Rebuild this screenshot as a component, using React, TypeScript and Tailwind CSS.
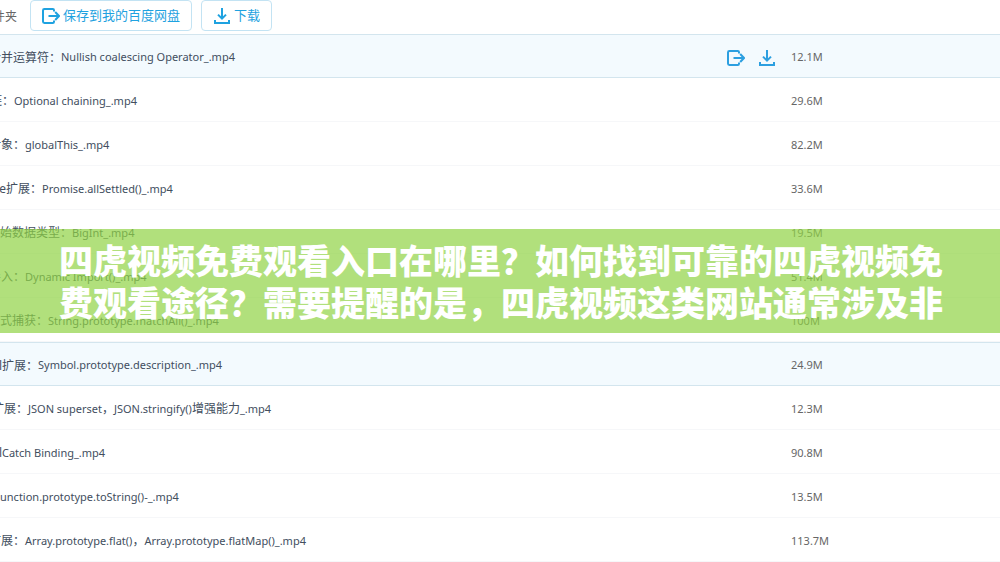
import clsx from 'clsx';

type FileRow = {
  lead: string;
  leadWidth: number;
  name: string;
  size: string;
  active?: boolean;
  actions?: boolean;
};

// leadWidth: visible part of the clipped start of each file name
const FILES: FileRow[] = [
  { lead: '合并运算符：', leadWidth: 61, name: 'Nullish coalescing Operator_.mp4', size: '12.1M', active: true, actions: true },
  { lead: '链：', leadWidth: 14, name: 'Optional chaining_.mp4', size: '29.6M' },
  { lead: '对象：', leadWidth: 25, name: 'globalThis_.mp4', size: '82.2M' },
  { lead: 'se扩展：', leadWidth: 42, name: 'Promise.allSettled()_.mp4', size: '33.6M' },
  { lead: '原始数据类型：', leadWidth: 72, name: 'BigInt_.mp4', size: '19.5M' },
  { lead: '导入：', leadWidth: 25, name: 'Dynamic Import()_.mp4', size: '51.4M' },
  { lead: '模式捕获：', leadWidth: 48, name: 'String.prototype.matchAll()_.mp4', size: '100M' },
  { lead: 'ol扩展：', leadWidth: 38, name: 'Symbol.prototype.description_.mp4', size: '24.9M', active: true },
  { lead: '扩展：', leadWidth: 28, name: 'JSON superset，JSON.stringify()增强能力_.mp4', size: '12.3M' },
  { lead: 'l', leadWidth: 2, name: 'Catch Binding_.mp4', size: '90.8M' },
  { lead: 'F', leadWidth: 0, name: 'unction.prototype.toString()-_.mp4', size: '13.5M' },
  { lead: '扩展：', leadWidth: 25, name: 'Array.prototype.flat()，Array.prototype.flatMap()_.mp4', size: '113.7M' },
];

function SaveIcon() {
  return (
    <svg width="18" height="18" viewBox="0 0 18 18" fill="none" stroke="currentColor" strokeWidth="2" aria-hidden="true">
      <path d="M12 4.5V3.2Q12 2 10.8 2H2.4Q1 2 1 3.4v11.2Q1 16 2.4 16h8.4q1.2 0 1.2-1.2v-1.3" />
      <path d="M6.5 9H17M13.2 5 17 9l-3.8 4" />
    </svg>
  );
}

function DownloadIcon() {
  return (
    <svg width="18" height="18" viewBox="0 0 18 18" fill="none" stroke="currentColor" strokeWidth="2" aria-hidden="true">
      <path d="M9 1v10.5M5 7.6l4 4 4-4" />
      <path d="M2 13v3h14v-3" />
    </svg>
  );
}

// Chinese runs are set one step larger than the Latin ones
function FileName({ name }: { name: string }) {
  return (
    <span>
      {name.split(/([，\u4e00-\u9fff]+)/).map((part, i) => (
        <span key={i} className={i % 2 ? 'text-xs' : 'text-[11px]'}>{part}</span>
      ))}
    </span>
  );
}

export default function App() {
  return (
    <div className="relative overflow-hidden bg-white font-['Noto_Sans','Noto_Sans_CJK_SC',sans-serif] text-[#424e5e]">
      {/* Toolbar */}
      <header className="flex h-[34px] items-start text-[13px]">
        <div className="flex h-[34px] w-[30px] shrink-0 items-center">
          <span className="flex w-[17px] justify-end overflow-hidden whitespace-nowrap text-xs text-[#666]">件夹</span>
        </div>
        <div className="flex gap-[9px] text-[#1fa2e0]">
          <button className="flex h-[31px] items-center gap-[3px] rounded border border-[#c3e3f3] px-[11px]">
            <SaveIcon />
            保存到我的百度网盘
          </button>
          <button className="flex h-[31px] items-center gap-[3px] rounded border border-[#c3e3f3] px-[11px]">
            <DownloadIcon />
            下载
          </button>
        </div>
      </header>

      {/* File list */}
      <table className="w-full table-fixed border-separate border-spacing-0 text-[11px]">
        <colgroup>
          <col />
          <col className="w-[209px]" />
        </colgroup>
        <tbody>
          {FILES.map(file => (
            <tr key={file.name} className={clsx(file.active && 'bg-[#f3fafe]')}>
              <td className={clsx('h-11 border-b p-0 pt-[3px]', file.active ? 'border-t border-[#d3e5ee]' : 'border-[#f6f7f9]')}>
                <div className="flex items-center justify-between pr-[15px]">
                  <div className="flex items-center whitespace-nowrap">
                    <span className="flex justify-end overflow-hidden text-xs" style={{ width: file.leadWidth }}>{file.lead}</span>
                    <FileName name={file.name} />
                  </div>
                  {file.actions && (
                    <div className="flex gap-[13px] text-[#2c9fe0]">
                      <button aria-label="保存"><SaveIcon /></button>
                      <button aria-label="下载"><DownloadIcon /></button>
                    </div>
                  )}
                </div>
              </td>
              <td className={clsx('h-11 border-b p-0 pt-[3px] text-[#666]', file.active ? 'border-t border-[#d3e5ee]' : 'border-[#f6f7f9]')}>
                {file.size}
              </td>
            </tr>
          ))}
        </tbody>
      </table>

      {/* Headline band */}
      <div className="absolute inset-x-0 top-[229px] bg-[#90d345]/70 py-[10px] pr-14 pl-[58px]">
        <p className="text-center font-['Noto_Sans_CJK_SC',sans-serif] text-[34px] leading-[42px] font-black text-white">
          四虎视频免费观看入口在哪里？如何找到可靠的四虎视频免费观看途径？需要提醒的是，四虎视频这类网站通常涉及非
        </p>
      </div>
    </div>
  );
}
